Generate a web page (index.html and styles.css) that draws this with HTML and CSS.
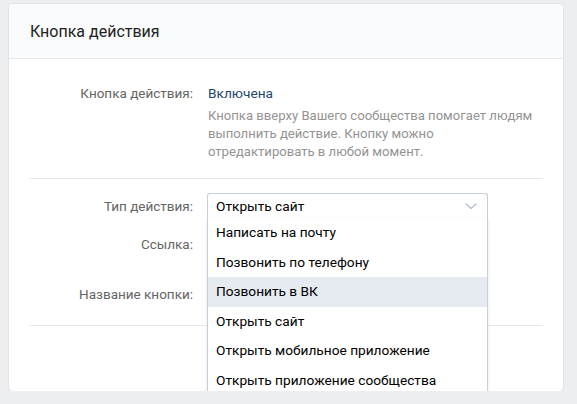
FILE: index.html
```html
<!DOCTYPE html>
<html lang="ru">
<head>
<meta charset="utf-8">
<link rel="stylesheet" href="styles.css">
</head>
<body>
<div class="card">
  <div class="card-head">Кнопка действия</div>
  <div class="card-body">
    <div class="row row-status">
      <div class="label">Кнопка действия:</div>
      <div class="value">
        <div class="status">Включена</div>
        <div class="desc">Кнопка вверху Вашего сообщества помогает людям выполнить действие. Кнопку можно<br>отредактировать в любой момент.</div>
      </div>
    </div>
    <div class="sep"></div>
    <div class="row row-field">
      <div class="label">Тип действия:</div>
      <div class="value">
        <div class="select">
          <span class="select-text">Открыть сайт</span>
          <svg class="chev" width="12" height="7" viewBox="0 0 12 7"><path d="M1 1l5 4.5L11 1" fill="none" stroke="#b6c0cc" stroke-width="1.4" stroke-linecap="round" stroke-linejoin="round"/></svg>
          <ul class="menu">
            <li class="item">Написать на почту</li>
            <li class="item">Позвонить по телефону</li>
            <li class="item active">Позвонить в ВК</li>
            <li class="item">Открыть сайт</li>
            <li class="item">Открыть мобильное приложение</li>
            <li class="item">Открыть приложение сообщества</li>
          </ul>
        </div>
      </div>
    </div>
    <div class="row row-field row-link">
      <div class="label">Ссылка:</div>
      <div class="value"><div class="field"></div></div>
    </div>
    <div class="row row-field row-name">
      <div class="label">Название кнопки:</div>
      <div class="value"><div class="field"></div></div>
    </div>
    <div class="sep sep-bottom"></div>
  </div>
</div>
</body>
</html>
```

FILE: styles.css
```css
html, body {
  margin: 0;
  padding: 0;
  background: #edeef0;
}
body {
  padding: 4px 14px 0 9px;
  font-family: Roboto, "Noto Sans", "Liberation Sans", sans-serif;
  font-size: 13.7px;
  color: #000;
}
.card {
  background: #fff;
  border-radius: 4px;
  box-shadow: 0 1px 0 0 #d7d8db, 0 0 0 1px #e3e4e8;
  height: 387px;
  box-sizing: border-box;
}
.card-head {
  height: 55px;
  box-sizing: border-box;
  background: #fafbfc;
  border-bottom: 1px solid #e7e8ec;
  border-radius: 4px 4px 0 0;
  padding: 18px 0 0 21px;
  font-size: 16px;
  line-height: 20px;
  color: #222;
}
.card-body {
  padding: 25px 20px 0 20px;
}
.row {
  display: grid;
  grid-template-columns: 164px 1fr;
  column-gap: 15px;
}
.label {
  text-align: right;
  color: #656565;
  font-size: 13.5px;
  line-height: 18px;
}
.status {
  color: #24466e;
  line-height: 18px;
  padding-bottom: 5px;
}
.desc {
  color: #939393;
  font-size: 13.1px;
  line-height: 18px;
  width: 350px;
}
.sep {
  height: 1px;
  background: #e7e8ec;
  margin: 17px 0 14px 0;
}
.sep-bottom {
  margin: 18px 0 0 0;
}
.row-field .label {
  padding-top: 4px;
}
.select {
  position: relative;
  margin-left: -1px;
  width: 281px;
  height: 26px;
  box-sizing: border-box;
  border: 1px solid #c5d0db;
  border-bottom-color: #d3d9de;
  border-radius: 3px 3px 0 0;
  display: flex;
  align-items: center;
  padding-left: 8px;
}
.select-text {
  flex: 1;
  line-height: 18px;
}
.chev {
  margin-right: 10px;
}
.menu {
  position: absolute;
  left: -1px;
  top: 24px;
  width: 281px;
  box-sizing: border-box;
  margin: 0;
  padding: 0;
  list-style: none;
  background: #fff;
  border: 1px solid #c5d0db;
  border-top: none;
  box-shadow: 0 1px 3px rgba(0, 0, 0, 0.1);
  z-index: 2;
}
.item {
  height: 29.6px;
  line-height: 29.6px;
  padding-left: 8px;
  color: #000;
}
.item.active {
  background: #e5ebf1;
}
.field {
  height: 26px;
}
.row-link {
  margin-top: 12px;
}
.row-name {
  margin-top: 24px;
}
```
